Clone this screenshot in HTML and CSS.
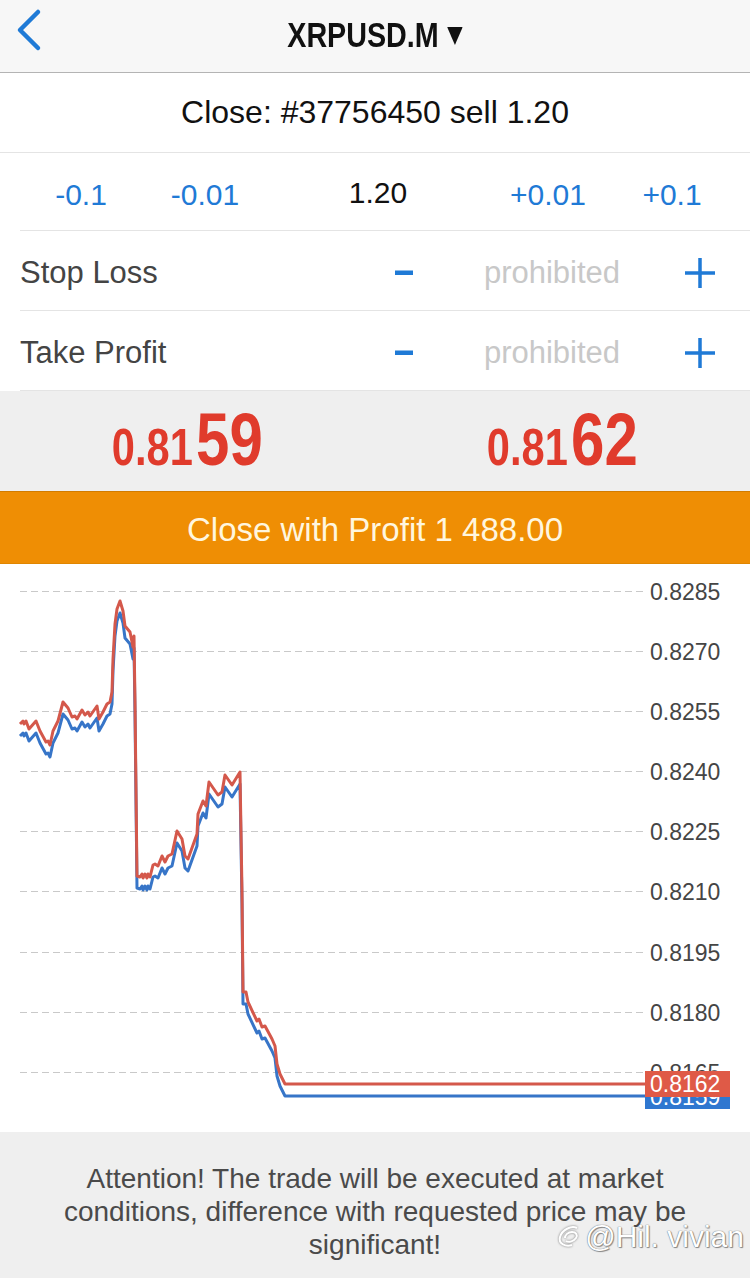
FILE: index.html
```html
<!DOCTYPE html>
<html lang="en">
<head>
    <meta charset="UTF-8">
    <meta name="viewport" content="width=device-width, initial-scale=1.0">
    <title>Close Order</title>
    <link rel="stylesheet" href="styles.css">
</head>
<body>

    <!-- Navigation bar -->
    <header class="navbar">
        <a class="back" href="#">
            <svg width="30" height="44" viewBox="0 0 30 44"><polyline points="24,4 6,22 24,40" fill="none" stroke="#1f7ad6" stroke-width="4.5" stroke-linecap="round" stroke-linejoin="round"/></svg>
        </a>
        <div class="title">
            <span>XRPUSD.M</span>
            <svg width="19" height="22" viewBox="0 0 19 22"><polygon points="0,3 19,3 9.5,21" fill="#111"/></svg>
        </div>
    </header>

    <div class="order-title">Close: #37756450 sell 1.20</div>

    <!-- Volume stepper -->
    <div class="volume-row">
        <span class="step">-0.1</span>
        <span class="step">-0.01</span>
        <span class="volume">1.20</span>
        <span class="step">+0.01</span>
        <span class="step">+0.1</span>
    </div>

    <!-- SL / TP -->
    <div class="level-row">
        <span class="level-label">Stop Loss</span>
        <span class="level-btn"><svg width="18" height="6"><rect width="18" height="4.5" y="0.5" fill="#1f7ad6"/></svg></span>
        <span class="level-value">prohibited</span>
        <span class="level-btn"><svg width="32" height="32"><path d="M16 1v30M1 16h30" stroke="#1f7ad6" stroke-width="3.5"/></svg></span>
    </div>
    <div class="level-row">
        <span class="level-label">Take Profit</span>
        <span class="level-btn"><svg width="18" height="6"><rect width="18" height="4.5" y="0.5" fill="#1f7ad6"/></svg></span>
        <span class="level-value">prohibited</span>
        <span class="level-btn"><svg width="32" height="32"><path d="M16 1v30M1 16h30" stroke="#1f7ad6" stroke-width="3.5"/></svg></span>
    </div>

    <!-- Bid / Ask -->
    <div class="quotes">
        <div class="quote"><span class="q-small">0.81</span><span class="q-big">59</span></div>
        <div class="quote"><span class="q-small">0.81</span><span class="q-big">62</span></div>
    </div>

    <button class="close-btn">Close with Profit 1 488.00</button>

    <!-- Tick chart -->
    <div class="chart">
        <svg width="750" height="568" viewBox="0 0 750 568">
            <g stroke="#c9c9c9" stroke-width="1" stroke-dasharray="7 4">
                <line x1="20" x2="645" y1="27.5" y2="27.5"/>
                <line x1="20" x2="645" y1="87.5" y2="87.5"/>
                <line x1="20" x2="645" y1="147.5" y2="147.5"/>
                <line x1="20" x2="645" y1="207.5" y2="207.5"/>
                <line x1="20" x2="645" y1="267.5" y2="267.5"/>
                <line x1="20" x2="645" y1="327.5" y2="327.5"/>
                <line x1="20" x2="645" y1="388.5" y2="388.5"/>
                <line x1="20" x2="645" y1="448.5" y2="448.5"/>
                <line x1="20" x2="645" y1="508.5" y2="508.5"/>
            </g>
            <g class="axis">
                <text x="650" y="36">0.8285</text>
                <text x="650" y="96">0.8270</text>
                <text x="650" y="156">0.8255</text>
                <text x="650" y="216">0.8240</text>
                <text x="650" y="276">0.8225</text>
                <text x="650" y="336">0.8210</text>
                <text x="650" y="397">0.8195</text>
                <text x="650" y="457">0.8180</text>
                <text x="650" y="517">0.8165</text>
            </g>
            <polyline class="bid-line" transform="translate(0,12)" points="20,160 23,157 24,160 26,157 29,165 36,157 40,167 46,178 48,177 50,181 53,167 58,157 63,138 68,144 72,153 75,152 77,155 82,146 85,151 88,148 90,152 97,142 99,155 103,148 107,140 110,138 112,128 113,95 115,60 117,45 120,37 123,47 125,62 130,68 133,83 134,72 135,138 137,312 140,313 142,310 143,314 145,310 147,314 148,310 150,313 153,301 155,300 158,302 162,292 165,298 168,292 172,290 177,267 182,275 185,292 188,295 197,270 198,250 203,237 206,242 209,218 218,231 222,228 225,211 232,221 240,208 242,328 243,428 246,428 248,438 257,457 259,455 262,463 265,462 272,475 275,482 277,500 280,510 285,520 645,520"/>
            <polyline class="ask-line" points="20,160 23,157 24,160 26,157 29,165 36,157 40,167 46,178 48,177 50,181 53,167 58,157 63,138 68,144 72,153 75,152 77,155 82,146 85,151 88,148 90,152 97,142 99,155 103,148 107,140 110,138 112,128 113,95 115,60 117,45 120,37 123,47 125,62 130,68 133,83 134,72 135,138 137,312 140,313 142,310 143,314 145,310 147,314 148,310 150,313 153,301 155,300 158,302 162,292 165,298 168,292 172,290 177,267 182,275 185,292 188,295 197,270 198,250 203,237 206,242 209,218 218,231 222,228 225,211 232,221 240,208 242,328 243,428 246,428 248,438 257,457 259,455 262,463 265,462 272,475 275,482 277,500 280,510 285,520 645,520"/>
            <rect x="645" y="520" width="85" height="25" fill="#2f77d0"/>
            <text class="tag" x="650" y="541">0.8159</text>
            <rect x="645" y="507" width="85" height="26" fill="#df5a47"/>
            <text class="tag" x="650" y="528">0.8162</text>
        </svg>
    </div>

    <!-- Warning -->
    <footer class="notice">
        Attention! The trade will be executed at market conditions, difference with requested price may be significant!
        <span class="watermark">
            <svg width="26" height="26" viewBox="0 0 26 26"><path d="M20 4c-6-3-15 2-17 9-2 7 6 10 12 8M8 14c0-3 3-6 7-6 4 0 6 3 4 6-2 3-7 5-10 3" fill="none" stroke="#fff" stroke-width="2"/></svg>@Hil. vivian
        </span>
    </footer>

</body>
</html>
```

FILE: styles.css
```css
/* Page */
body {
    margin: 0;
    width: 750px;
    font-family: "Liberation Sans", Arial, sans-serif;
    background-color: #fff;
    color: #111;
}

/* Navigation bar */
.navbar {
    height: 72px;
    background-color: #f7f7f7;
    border-bottom: 1px solid #b4b4b4;
    display: flex;
    align-items: center;
    justify-content: center;
    position: relative;
}
.back {
    position: absolute;
    left: 14px;
    top: 8px;
}
.title {
    display: flex;
    align-items: center;
    gap: 10px;
    font-size: 35px;
    font-weight: bold;
    transform: scaleX(0.82);
    margin-top: -2px;
}

.order-title {
    height: 79px;
    display: flex;
    align-items: center;
    justify-content: center;
    font-size: 32px;
    border-bottom: 1px solid #e4e4e4;
}

/* Volume stepper */
.volume-row {
    height: 78px;
    box-sizing: border-box;
    display: grid;
    grid-template-columns: 122px 126px 220px 120px 128px;
    padding: 5px 0 0 20px;
    align-items: center;
    justify-items: center;
    font-size: 30px;
    position: relative;
}
.volume-row::after,
.level-row::after {
    content: "";
    position: absolute;
    left: 20px;
    right: 0;
    bottom: 0;
    border-bottom: 1px solid #e4e4e4;
}
.step {
    color: #1f7ad6;
}
.volume {
    color: #111;
    margin-top: -4px;
}

/* SL / TP rows */
.level-row {
    height: 80px;
    box-sizing: border-box;
    display: grid;
    grid-template-columns: 1fr 68px 228px 68px;
    padding: 3px 16px 0 20px;
    align-items: center;
    font-size: 31px;
    position: relative;
}
.level-row:last-of-type::after {
    display: none;
}
.level-label {
    color: #444;
}
.level-btn {
    display: flex;
    justify-content: center;
}
.level-value {
    text-align: center;
    color: #c8c8c8;
}

/* Bid / Ask */
.quotes {
    height: 100px;
    background-color: #efefef;
    display: grid;
    grid-template-columns: 1fr 1fr;
    justify-items: center;
    align-items: start;
    padding-top: 11px;
    box-sizing: border-box;
}
.quote {
    color: #e03b2c;
    font-weight: bold;
    line-height: 75px;
    transform: scaleX(0.8);
}
.q-small {
    font-size: 52px;
}
.q-big {
    font-size: 75px;
    margin-left: 4px;
}

/* Close button */
.close-btn {
    display: block;
    width: 100%;
    height: 73px;
    margin: 0;
    border: none;
    border-top: 1px solid #d27c00;
    border-bottom: 1px solid #e08600;
    background-color: #ef8e04;
    color: #fff6df;
    font-family: "Liberation Sans", Arial, sans-serif;
    font-size: 33px;
    padding: 5px 0 0;
}

/* Chart */
.chart {
    height: 568px;
    background-color: #fff;
}
.chart svg {
    display: block;
}
.axis text {
    font-size: 23px;
    fill: #454545;
    font-family: "Liberation Sans", Arial, sans-serif;
}
.bid-line,
.ask-line {
    fill: none;
    stroke-width: 3;
    stroke-linejoin: round;
}
.bid-line {
    stroke: #3775c8;
}
.ask-line {
    stroke: #d4584b;
}
.tag {
    font-size: 23px;
    fill: #fff;
    font-family: "Liberation Sans", Arial, sans-serif;
}

/* Warning */
.notice {
    height: 146px;
    box-sizing: border-box;
    background-color: #efefef;
    padding: 30px 40px 0;
    text-align: center;
    font-size: 28px;
    line-height: 33px;
    color: #4a4a4a;
    position: relative;
}
.watermark {
    position: absolute;
    right: 6px;
    top: 88px;
    display: flex;
    align-items: center;
    gap: 2px;
    font-size: 30px;
    color: #fff;
    text-shadow: 0 0 1px #777, 0 0 1px #777, 1px 1px 1px #888;
}
.watermark svg {
    filter: drop-shadow(0 0 1px #777);
}
```
